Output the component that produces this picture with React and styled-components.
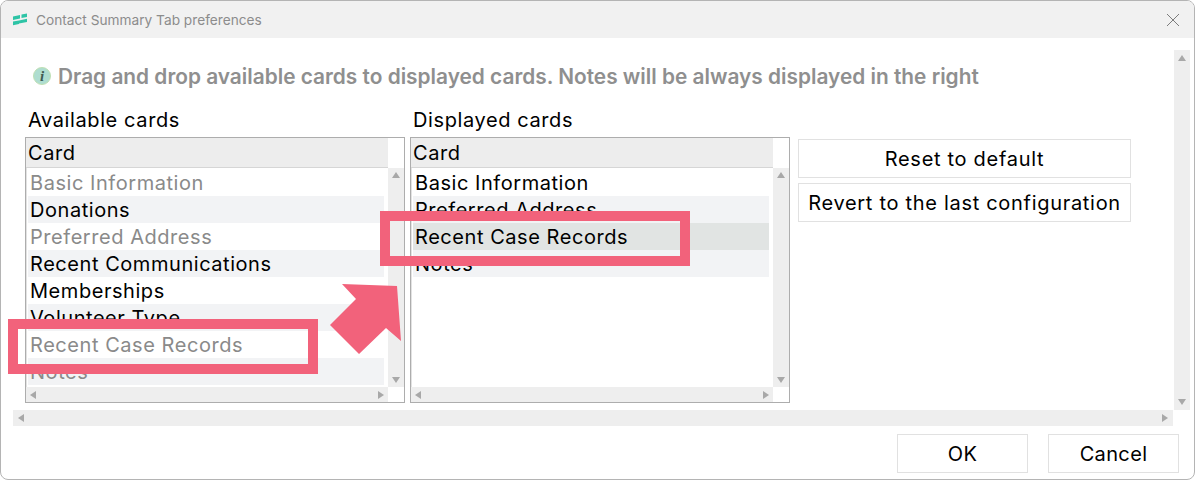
import React from "react"
import styled, { createGlobalStyle } from "styled-components"

const availableRows = [
  { name: "Basic Information", muted: true },
  { name: "Donations" },
  { name: "Preferred Address", muted: true },
  { name: "Recent Communications" },
  { name: "Memberships" },
  { name: "Volunteer Type" },
  { name: "Recent Case Records", muted: true },
  { name: "Notes", muted: true },
]

const displayedRows = [
  { name: "Basic Information" },
  { name: "Preferred Address" },
  { name: "Recent Case Records", selected: true },
  { name: "Notes" },
]

const GlobalStyle = createGlobalStyle`
  html, body {
    margin: 0;
    padding: 0;
    background: #ffffff;
    overflow: hidden;
  }
  * {
    box-sizing: border-box;
  }
`

const Window = styled.div`
  position: relative;
  width: 1195px;
  height: 480px;
  display: flex;
  flex-direction: column;
  background: #ffffff;
  border: 1px solid #b4b4b4;
  border-radius: 8px;
  overflow: hidden;
  font-family: Inter, "Liberation Sans", sans-serif;
  color: #000000;
`

const TitleBar = styled.div`
  height: 37px;
  flex: none;
  display: flex;
  align-items: center;
  gap: 8px;
  padding: 0 14px 0 11px;
  background: #f1f1f1;
`

const Title = styled.span`
  flex: 1;
  font-size: 13.7px;
  color: #8c8c8c;
`

const Body = styled.div`
  flex: none;
  height: 389px;
  display: grid;
  grid-template-columns: 1160px 16px;
  grid-template-rows: 360px 16px;
  padding: 12px 0 0 12px;
  column-gap: 1px;
`

const Pane = styled.div`
  padding: 13px 0 0 12px;
`

const InfoLine = styled.div`
  display: flex;
  align-items: center;
  gap: 7px;
  height: 26px;
  padding-left: 8px;
  font-size: 20.85px;
  font-weight: 600;
  white-space: nowrap;
  color: #8f8f8f;
`

const InfoIcon = styled.span`
  width: 18px;
  height: 18px;
  flex: none;
  display: flex;
  align-items: center;
  justify-content: center;
  border-radius: 50%;
  border: 1px solid #bfe0b4;
  background: #aeddd0;
  font-family: "Liberation Serif", serif;
  font-style: italic;
  font-weight: 700;
  font-size: 15px;
  color: #3f5a52;
`

const Columns = styled.div`
  display: flex;
  align-items: flex-start;
  margin-top: 17px;
`

const CardColumn = styled.div`
  width: 380px;
  margin-right: 5px;
`

const ColumnLabel = styled.div`
  height: 31px;
  padding: 2px 0 0 3px;
  font-size: 20px;
  line-height: 24px;
  letter-spacing: 0.6px;
`

const CardTable = styled.div`
  width: 380px;
  height: 266px;
  display: grid;
  grid-template-columns: 362px 16px;
  grid-template-rows: 30px 219px 15px;
  border: 1px solid #adadad;
`

const TableHead = styled.div`
  padding-left: 2px;
  background: #ededed;
  border-bottom: 1px solid #d6d6d6;
  font-size: 20px;
  line-height: 31px;
  letter-spacing: 0.6px;
`

const HeadFiller = styled.div`
  background: #ffffff;
`

const Rows = styled.div`
  padding: 1px 4px 0 1px;
  overflow: hidden;
  border-left: 1px solid #e2e2e2;
`

const Row = styled.div`
  height: 27px;
  padding-left: 2px;
  font-size: 20px;
  line-height: 29px;
  letter-spacing: 0.55px;
  white-space: nowrap;
  color: ${({ $muted }) => ($muted ? "#8a8a8a" : "#000000")};
  background: ${({ $selected, $alt }) =>
    $selected ? "#e1e4e3" : $alt ? "#f2f3f5" : "#ffffff"};
`

const ScrollTrack = styled.div`
  display: flex;
  flex-direction: ${({ $horizontal }) => ($horizontal ? "row" : "column")};
  align-items: center;
  justify-content: space-between;
  padding: ${({ $horizontal, $inset }) => ($horizontal ? `0 ${$inset}px` : `${$inset}px 0`)};
  background: #eeeeee;
`

const Corner = styled.div`
  background: #ffffff;
`

const ActionColumn = styled.div`
  display: flex;
  flex-direction: column;
  gap: 5px;
  width: 333px;
  margin: 33px 0 0 3px;
`

const PlainButton = styled.button`
  height: 39px;
  width: ${({ $wide }) => ($wide ? "100%" : "131px")};
  padding: 0;
  background: #ffffff;
  border: 1px solid #e1e1e1;
  font-family: inherit;
  font-size: 20px;
  letter-spacing: ${({ $wide }) => ($wide ? "0.7px" : "0.35px")};
  color: #000000;
`

const Footer = styled.div`
  flex: 1;
  display: flex;
  justify-content: flex-end;
  align-items: flex-start;
  gap: 20px;
  padding: 7px 15px 0 0;
`

const HighlightBox = styled.div`
  position: absolute;
  left: ${({ $left }) => $left}px;
  top: ${({ $top }) => $top}px;
  width: 310px;
  height: 55px;
  border: 10px solid #f2627b;
`

const ArrowMark = styled.svg`
  position: absolute;
  left: 329px;
  top: 283px;
`

const Logo = () => (
  <svg width="16" height="13" viewBox="0 0 16 13">
    <path d="M1 3.5 L8 2 V5.6 L1 6.9 Z" fill="#2ec4a6" />
    <path d="M1 8.6 L7 7.4 V11 L1 12.2 Z" fill="#2ec4a6" />
    <path d="M9.5 1.4 L15 .4 V4 L9.5 5 Z" fill="#2ec4a6" />
    <path d="M7 7.4 L15 5.8 V9 L7 10.6 Z" fill="#2ec4a6" />
  </svg>
)

const CloseIcon = () => (
  <svg width="14" height="14" viewBox="0 0 14 14">
    <path d="M1 1 L13 13 M13 1 L1 13" stroke="#7c7c7c" strokeWidth="1" fill="none" />
  </svg>
)

const Caret = ({ dir }) => {
  const shapes = {
    up: "1,8 5,2 9,8",
    down: "1,2 9,2 5,8",
    left: "8,1 8,9 2,5",
    right: "2,1 2,9 8,5",
  }
  return (
    <svg width="10" height="10" viewBox="0 0 10 10">
      <polygon points={shapes[dir]} fill="#a8a8a8" />
    </svg>
  )
}

const VerticalBar = ({ inset }) => (
  <ScrollTrack $inset={inset}>
    <Caret dir="up" />
    <Caret dir="down" />
  </ScrollTrack>
)

const HorizontalBar = ({ inset }) => (
  <ScrollTrack $horizontal $inset={inset}>
    <Caret dir="left" />
    <Caret dir="right" />
  </ScrollTrack>
)

const CardList = ({ label, rows }) => (
  <CardColumn>
    <ColumnLabel>{label}</ColumnLabel>
    <CardTable>
      <TableHead>Card</TableHead>
      <HeadFiller />
      <Rows>
        {rows.map(({ name, muted, selected }, key) => (
          <Row key={name} $muted={muted} $selected={selected} $alt={key % 2 === 1}>
            {name}
          </Row>
        ))}
      </Rows>
      <VerticalBar inset={2} />
      <HorizontalBar inset={2} />
      <Corner />
    </CardTable>
  </CardColumn>
)

const App = () => (
  <Window>
    <GlobalStyle />
    <TitleBar>
      <Logo />
      <Title>Contact Summary Tab preferences</Title>
      <CloseIcon />
    </TitleBar>
    <Body>
      <Pane>
        <InfoLine>
          <InfoIcon>i</InfoIcon>
          Drag and drop available cards to displayed cards. Notes will be always displayed in the right
        </InfoLine>
        <Columns>
          <CardList label="Available cards" rows={availableRows} />
          <CardList label="Displayed cards" rows={displayedRows} />
          <ActionColumn>
            <PlainButton $wide>Reset to default</PlainButton>
            <PlainButton $wide>Revert to the last configuration</PlainButton>
          </ActionColumn>
        </Columns>
      </Pane>
      <VerticalBar inset={3} />
      <HorizontalBar inset={3} />
      <Corner />
    </Body>
    <Footer>
      <PlainButton>OK</PlainButton>
      <PlainButton>Cancel</PlainButton>
    </Footer>
    <HighlightBox $left={7} $top={318} />
    <HighlightBox $left={379} $top={210} />
    <ArrowMark width="74" height="74" viewBox="0 0 74 74">
      <polygon points="12,0 67,2 71,57 56,44 29,70 0,41 26,15" fill="#f2627b" />
    </ArrowMark>
  </Window>
)

export default App
